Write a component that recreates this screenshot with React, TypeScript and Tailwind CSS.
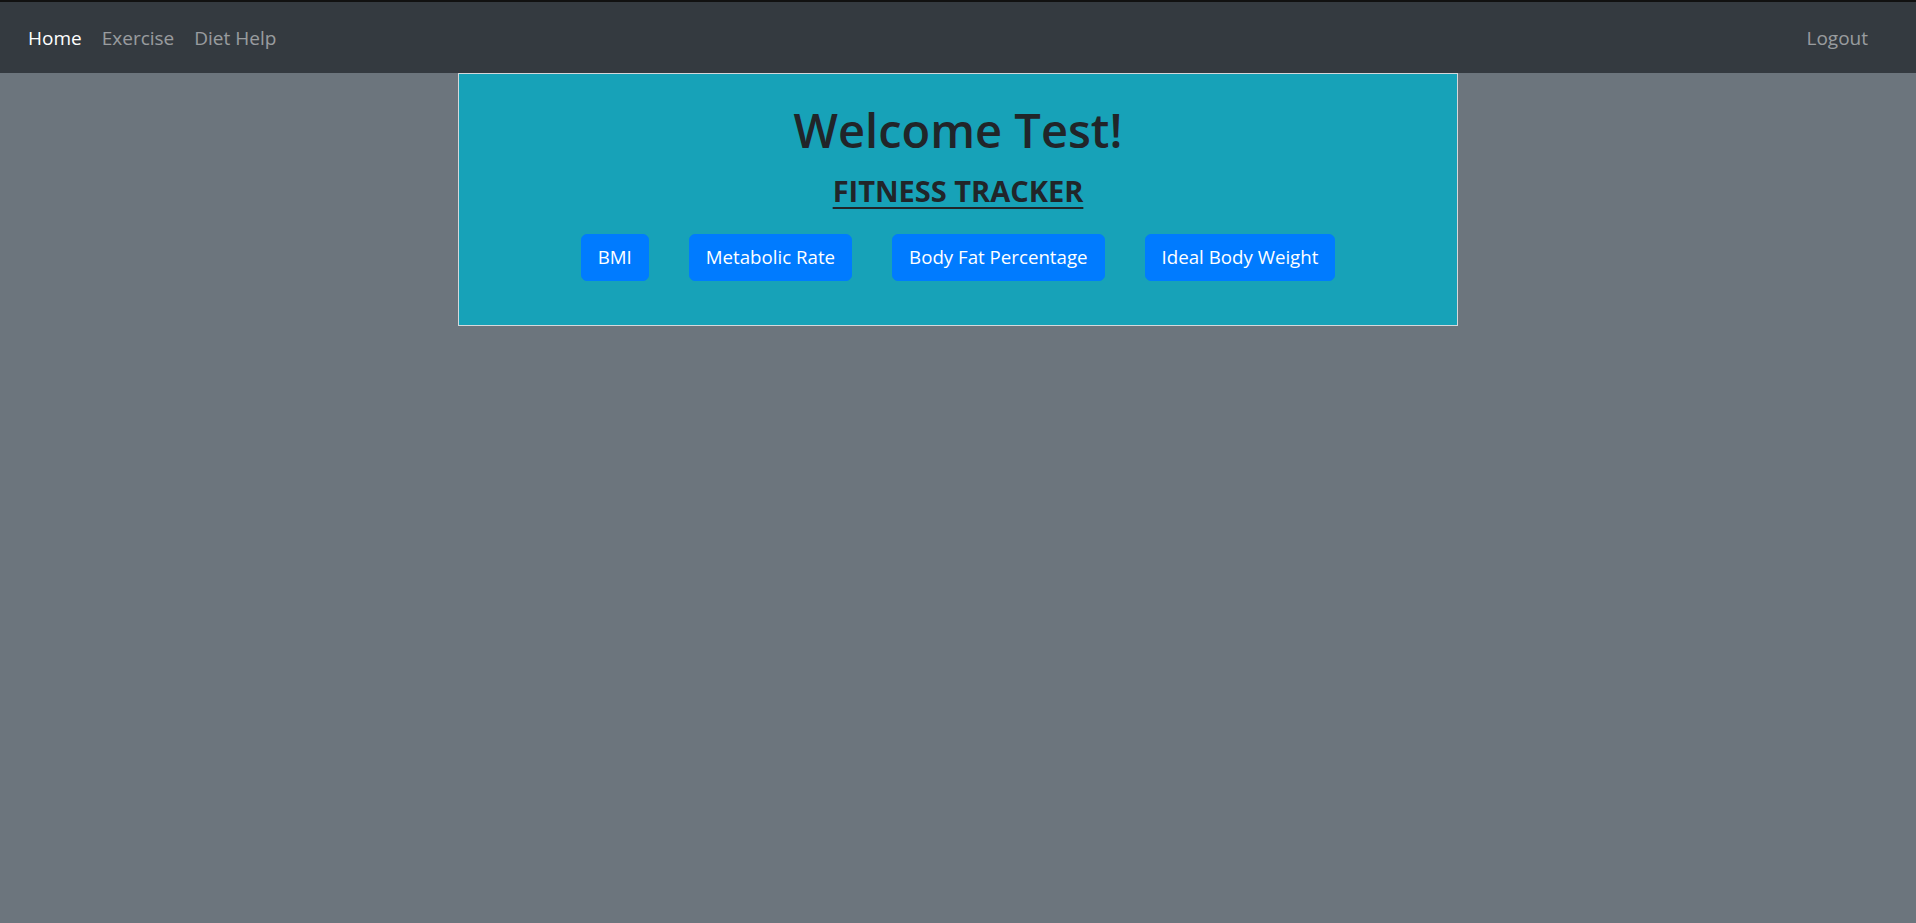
import React from "react";

const navLinks = [
  { label: "Home", active: true },
  { label: "Exercise", active: false },
  { label: "Diet Help", active: false },
];

const tools = ["BMI", "Metabolic Rate", "Body Fat Percentage", "Ideal Body Weight"];

export default function App() {
  return (
    <div
      className="min-h-screen bg-[#6c757d]"
      style={{ fontFamily: '"Open Sans", "Noto Sans", sans-serif' }}
    >
      <div className="h-[2px] bg-[#111]" />
      <nav className="flex h-[71px] items-center justify-between bg-[#343a40] pl-[18px] pr-[38px]">
        <ul className="flex items-center">
          {navLinks.map((link) => (
            <li key={link.label}>
              <a
                href="#"
                className={`block px-[10px] text-[19px] leading-[30px] ${
                  link.active ? "text-white" : "text-white/50"
                }`}
              >
                {link.label}
              </a>
            </li>
          ))}
        </ul>
        <a href="#" className="block px-[10px] text-[19px] leading-[30px] text-white/50">
          Logout
        </a>
      </nav>

      <main className="flex justify-center">
        <section className="flex h-[253px] w-[1000px] flex-col items-center border border-[#d6d8db] bg-[#17a2b8] pt-[26px] text-[#212529]">
          <h1 className="text-[47px] leading-[60px] font-semibold">Welcome Test!</h1>
          <h4 className="mt-[13px] text-[29px] leading-[36px] font-bold underline decoration-2 underline-offset-[5px]">
            FITNESS TRACKER
          </h4>
          <div className="mt-[25px] flex gap-[40px]">
            {tools.map((tool) => (
              <button
                key={tool}
                type="button"
                className="h-[47px] rounded-[6px] border border-[#007bff] bg-[#007bff] px-[16px] text-[18.7px] text-white"
              >
                {tool}
              </button>
            ))}
          </div>
        </section>
      </main>
    </div>
  );
}
